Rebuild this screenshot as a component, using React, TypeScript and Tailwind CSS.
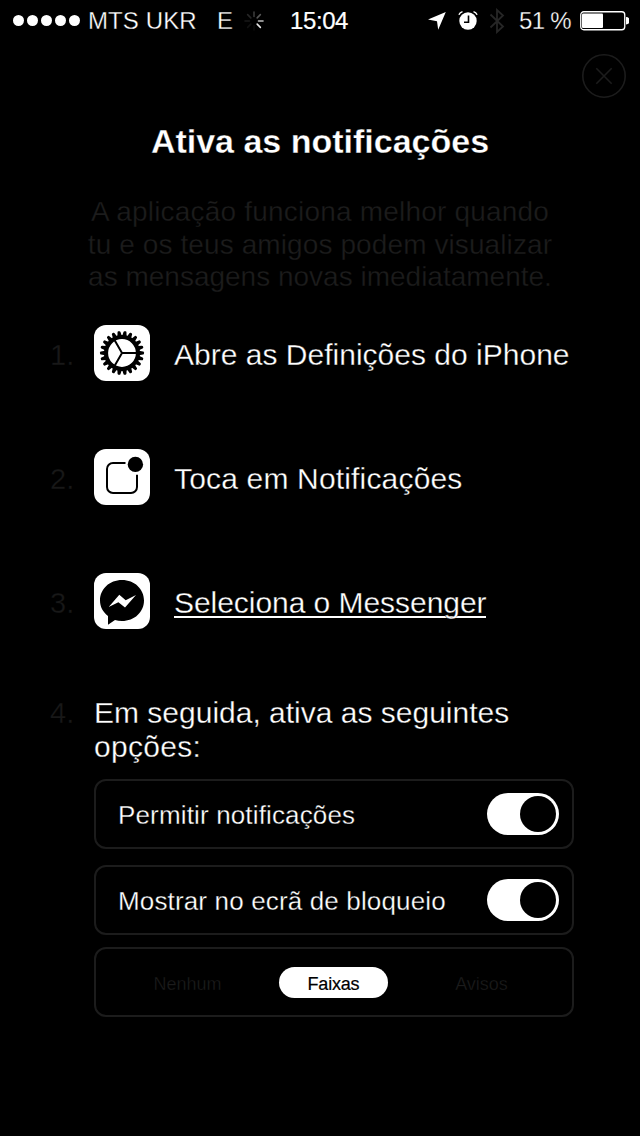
import type { ReactNode } from 'react';

const GEAR_TEETH = 22;

function SignalDots() {
  return (
    <div className="flex gap-[3px]">
      {[0, 1, 2, 3, 4].map((dot) => (
        <span key={dot} className="w-[11px] h-[11px] rounded-full bg-white" />
      ))}
    </div>
  );
}

function Spinner() {
  const shades = ['#3a3a3a', '#555555', '#bdbdbd', '#e8e8e8', '#0c0c0c', '#111111', '#181818', '#262626'];

  return (
    <svg className="w-5 h-5" viewBox="-10 -10 20 20">
      {shades.map((shade, i) => (
        <line
          key={i}
          x1="0"
          y1="-4.5"
          x2="0"
          y2="-9"
          stroke={shade}
          strokeWidth="1.6"
          strokeLinecap="round"
          transform={`rotate(${i * 45})`}
        />
      ))}
    </svg>
  );
}

function LocationIcon() {
  return (
    <svg className="w-[18px] h-[18px]" viewBox="0 0 18 18" fill="#fff">
      <path d="M17.8 0 L0 7.6 L9 9.3 L10.2 17.8 Z" />
    </svg>
  );
}

function AlarmIcon() {
  return (
    <svg className="w-5 h-5" viewBox="0 0 20 20" fill="none">
      <circle cx="10" cy="11" r="8.7" fill="#fff" />
      <path d="M10.5 5.5 V12.3 H6" stroke="#000" strokeWidth="1.6" />
      <path d="M0.9 4.8 A6 6 0 0 1 4.5 1.6 M19.1 4.8 A6 6 0 0 0 15.5 1.6" stroke="#fff" strokeWidth="1.4" />
    </svg>
  );
}

function BluetoothIcon() {
  return (
    <svg className="w-4 h-[26px]" viewBox="0 0 16 26" fill="none" stroke="#262626" strokeWidth="1.8">
      <path d="M1.5 6.5 L14 18.5 L8 24 V2 L14 7.5 L1.5 19.5" />
    </svg>
  );
}

function BatteryIcon() {
  return (
    <svg className="w-[49px] h-5" viewBox="0 0 49 20">
      <rect x="0.75" y="0.75" width="44" height="18" rx="3" fill="none" stroke="#fff" strokeWidth="1.3" />
      <rect x="2" y="2.5" width="21" height="14.5" rx="1" fill="#fff" />
      <path d="M46 6 A3.6 3.6 0 0 1 46 13.5 Z" fill="#fff" />
    </svg>
  );
}

function StatusBar() {
  return (
    <header className="flex items-center h-[41px] pl-[13px] pr-[10px] text-2xl leading-none whitespace-nowrap">
      <SignalDots />
      <span className="ml-2 w-[129px] tracking-[0.1px]">MTS UKR</span>
      <span className="w-[27px]">E</span>
      <Spinner />
      <span className="ml-[26px] w-[138px] tracking-[-0.4px] [-webkit-text-stroke:0.2px_#fff]">15:04</span>
      <LocationIcon />
      <span className="ml-3 -mt-[1px]">
        <AlarmIcon />
      </span>
      <span className="ml-[11px]">
        <BluetoothIcon />
      </span>
      <span className="ml-[14px] w-[61px] tracking-[-0.7px]">51 %</span>
      <BatteryIcon />
    </header>
  );
}

function SettingsIcon() {
  return (
    <svg className="w-14 h-14" viewBox="-28 -28 56 56">
      {Array.from({ length: GEAR_TEETH }, (_, i) => (
        <path
          key={i}
          d="M-2.2 -17 L-1.5 -21 Q-1.3 -22 -0.5 -22 H0.5 Q1.3 -22 1.5 -21 L2.2 -17 Z"
          transform={`rotate(${((i + 0.5) * 360) / GEAR_TEETH})`}
        />
      ))}
      <circle r="16" fill="none" stroke="#000" strokeWidth="4.2" />
      <path d="M0 0 H15 M0 0 L-7.5 -13 M0 0 L-7.5 13" stroke="#000" strokeWidth="2" />
    </svg>
  );
}

function NotificationsIcon() {
  return (
    <svg className="w-14 h-14" viewBox="0 0 56 56">
      <path
        d="M31.5 14 H19 A6 6 0 0 0 13 20 V38 A6 6 0 0 0 19 44 H37 A6 6 0 0 0 43 38 V25.7"
        fill="none"
        stroke="#000"
        strokeWidth="2"
      />
      <circle cx="41.4" cy="15.4" r="7.7" />
    </svg>
  );
}

function MessengerIcon() {
  return (
    <svg className="w-14 h-14" viewBox="0 0 56 56">
      <path d="M28 7 C40.5 7 50 16 50 27.5 C50 39 40.5 48 28 48 C25.5 48 23.2 47.7 21 47 L14 51.7 V43 C9 39 6 34 6 27.5 C6 16 15.5 7 28 7 Z" />
      <path d="M14.7 33.9 L25.3 21.7 L31.7 27.2 L42 22 L31 34.5 L24.4 29.2 Z" fill="#fff" />
    </svg>
  );
}

interface StepProps {
  number: number;
  icon: ReactNode;
  children: ReactNode;
}

function Step({ number, icon, children }: StepProps) {
  return (
    <li className="flex items-center h-14 text-[30px] leading-[34px] whitespace-nowrap">
      <span className="w-[44px] pt-1 text-[#181818] text-[29px]">{number}.</span>
      <span className="w-14 h-14 rounded-xl bg-white overflow-hidden">{icon}</span>
      <span className="ml-6 pt-1">{children}</span>
    </li>
  );
}

function ToggleRow({ label }: { label: string }) {
  return (
    <div className="flex items-center justify-between h-[70px] pl-[22px] pr-[13px] border-2 border-[#1c1c1c] rounded-xl">
      <span className="pt-0.5 text-[26px] tracking-[0.15px] whitespace-nowrap">{label}</span>
      <span className="flex items-center justify-end w-[72px] h-[42px] pr-[3px] rounded-full bg-white">
        <span className="w-9 h-9 rounded-full bg-black" />
      </span>
    </div>
  );
}

export default function App() {
  return (
    // The thin black stroke trims the glyphs down to a light weight
    <div className="flex flex-col w-[640px] h-[1136px] bg-black text-white font-['Liberation_Sans',Arial,sans-serif] [-webkit-text-stroke:0.3px_#000] overflow-hidden">
      <StatusBar />

      <div className="flex justify-end pt-3 pr-[13px]">
        <button aria-label="Fechar">
          <svg className="block w-[46px] h-[46px]" viewBox="0 0 46 46" fill="none" stroke="#1c1c1c" strokeWidth="1.6">
            <circle cx="23" cy="23" r="21.2" />
            <path d="M15.3 15.3 L30.7 30.7 M30.7 15.3 L15.3 30.7" />
          </svg>
        </button>
      </div>

      <h1 className="mt-[22px] h-10 text-center text-[34px] leading-10 font-bold">
        Ativa as notificações
      </h1>
      <p className="mt-[35px] text-center text-[28px] leading-[32.5px] text-[#1c1c1c]">
        <span className="tracking-[0.2px]">A aplicação funciona melhor quando</span>
        <br />
        <span className="tracking-[0.1px]">tu e os teus amigos podem visualizar</span>
        <br />
        as mensagens novas imediatamente.
      </p>

      <ol className="flex flex-col gap-[68px] mt-[31px] pl-[50px]">
        <Step number={1} icon={<SettingsIcon />}>
          <span className="tracking-[0.01px]">Abre as Definições do iPhone</span>
        </Step>
        <Step number={2} icon={<NotificationsIcon />}>
          <span className="tracking-[0.17px]">Toca em Notificações</span>
        </Step>
        <Step number={3} icon={<MessengerIcon />}>
          <a className="inline-block leading-[27px] border-b-2 border-white tracking-[-0.05px]">Seleciona o Messenger</a>
        </Step>
      </ol>

      <section className="flex mt-[67px] pl-[50px] leading-[34px]">
        <span className="w-[44px] text-[29px] text-[#181818]">4.</span>
        <div className="w-[480px]">
          <p className="text-[30px]">
            Em seguida, ativa as seguintes
            <br />
            <span className="tracking-[0.3px]">opções:</span>
          </p>
          <div className="flex flex-col gap-4 mt-[15px]">
            <ToggleRow label="Permitir notificações" />
            <ToggleRow label="Mostrar no ecrã de bloqueio" />
          </div>
          <div className="flex items-center h-[70px] mt-3 border-2 border-[#1c1c1c] rounded-xl text-lg leading-none">
            <span className="w-[183px] text-center pt-1 text-[#1c1c1c]">Nenhum</span>
            <span className="w-[109px] h-[31px] mt-[1px] pt-[8px] rounded-full bg-white text-black text-center tracking-[-0.2px] [-webkit-text-stroke:0.2px_#000]">
              Faixas
            </span>
            <span className="w-[184px] text-center pt-1 pl-[3px] text-[#1c1c1c]">Avisos</span>
          </div>
        </div>
      </section>
    </div>
  );
}
